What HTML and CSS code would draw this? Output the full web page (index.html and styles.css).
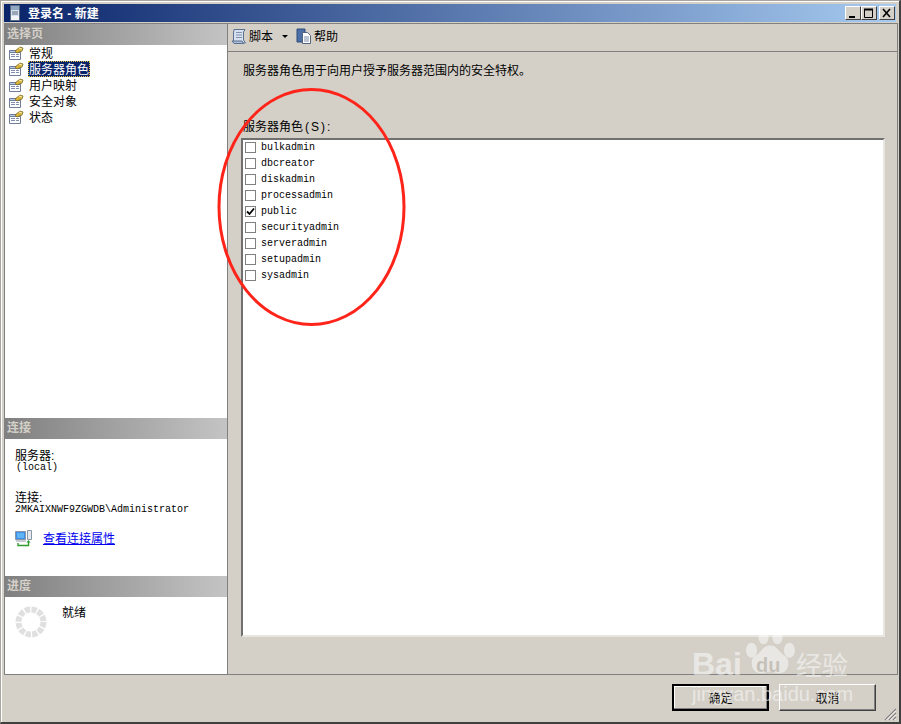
FILE: index.html
```html
<!DOCTYPE html>
<html lang="zh">
<head>
<meta charset="utf-8">
<title>登录名 - 新建</title>
<link rel="stylesheet" href="styles.css">
</head>
<body>
<svg class="defs" width="0" height="0">
  <symbol id="page" viewBox="0 0 16 16">
    <path d="M1.500 5.500h11v9h-11z" fill="#fff" stroke="#6f7f9a"/>
    <path d="M1.500 5.500h11v2h-11z" fill="#b9c8e0" stroke="#6f7f9a"/>
    <path d="M3 9.500h4M3 11.500h4M8 9.500h3M8 11.500h3" stroke="#7d8fb0"/>
    <path d="M7 6l5-4 3 1-1 3-5 2z" fill="#d9b43a" stroke="#7d6c28" stroke-width=".8"/>
    <path d="M11 3l3 1" stroke="#fff2a8"/>
  </symbol>
</svg>
<div class="window">
  <header class="titlebar">
    <svg class="title-icon" width="12" height="16" viewBox="0 0 12 16">
      <path d="M1.500.5h9v15h-9z" fill="#d8e2ee" stroke="#5a6a80"/>
      <path d="M2 1h8v4H2z" fill="#8fa6c4"/>
      <path d="M3 7h6M3 9h6" stroke="#5a6a80"/>
      <path d="M2 11h8v4H2z" fill="#f2f5f8"/>
    </svg>
    <span class="title-text">登录名 - 新建</span>
    <div class="caption-buttons">
      <span class="caption-btn"><svg width="12" height="10" viewBox="0 0 12 10"><path d="M2 8h6v2H2z" fill="#000"/></svg></span>
      <span class="caption-btn"><svg width="12" height="10" viewBox="0 0 12 10"><path d="M1.500 1.500h8v8h-8z" fill="none" stroke="#000"/><path d="M1 1.500h9" stroke="#000" stroke-width="2"/></svg></span>
      <span class="caption-btn caption-close"><svg width="12" height="10" viewBox="0 0 12 10"><path d="M2 1l7 8M9 1L2 9" stroke="#000" stroke-width="1.600" fill="none"/></svg></span>
    </div>
  </header>

  <div class="main">
    <aside class="side">
      <div class="side-head">选择页</div>
      <ul class="nav">
        <li class="nav-item"><svg class="nav-icon"><use href="#page"/></svg><span class="nav-label">常规</span></li>
        <li class="nav-item"><svg class="nav-icon"><use href="#page"/></svg><span class="nav-label nav-selected">服务器角色</span></li>
        <li class="nav-item"><svg class="nav-icon"><use href="#page"/></svg><span class="nav-label">用户映射</span></li>
        <li class="nav-item"><svg class="nav-icon"><use href="#page"/></svg><span class="nav-label">安全对象</span></li>
        <li class="nav-item"><svg class="nav-icon"><use href="#page"/></svg><span class="nav-label">状态</span></li>
      </ul>
      <div class="side-head">连接</div>
      <div class="conn">
        <div class="conn-label">服务器:</div>
        <div class="mono conn-local">(local)</div>
        <div class="conn-label conn-gap">连接:</div>
        <div class="mono">2MKAIXNWF9ZGWDB\Administrator</div>
        <div class="conn-link-row">
          <svg width="17" height="17" viewBox="0 0 17 17">
            <path d="M.5 1.500h10v8H.5z" fill="#3f8fe8" stroke="#8a97a8"/>
            <path d="M2 3h7v5H2z" fill="#5fb4f5"/>
            <path d="M1 10h10v2H1z" fill="#c8ccd4"/>
            <path d="M12.500.5h4v9h-4z" fill="#e6e8ec" stroke="#8a97a8"/>
            <path d="M3 13v2.500h10.500V12" fill="none" stroke="#2f9a2f" stroke-width="1.400"/>
            <path d="M11.500 12.500l2-2.500 2 2.500z" fill="#2f9a2f"/>
          </svg>
          <a class="conn-link" href="#">查看连接属性</a>
        </div>
      </div>
      <div class="side-head">进度</div>
      <div class="progress">
        <svg class="spinner" width="32" height="32" viewBox="0 0 32 32">
          <circle cx="16" cy="16" r="12.500" fill="none" stroke="#e0e0e0" stroke-width="6" stroke-dasharray="5.200 1.350"/>
        </svg>
        <span class="progress-text">就绪</span>
      </div>
    </aside>

    <section class="content">
      <div class="toolbar">
        <svg width="17" height="17" viewBox="0 0 17 17">
          <path d="M3 1.500h11l-1.500 2.500V12l2 3H4l-1.500-2V5z" fill="#d6e0ee" stroke="#5c7190"/>
          <path d="M1 13h10l1.500 2.500H3z" fill="#a9bcd6" stroke="#5c7190"/>
          <path d="M5 4.500h6M5 7h6M5 9.500h6" stroke="#7f93b0"/>
        </svg>
        <span class="tool-text">脚本</span>
        <span class="tool-arrow"></span>
        <svg class="tool-help-icon" width="17" height="17" viewBox="0 0 17 17">
          <path d="M1 1h8v13H1z" fill="#4d6fa8" stroke="#2f4a78"/>
          <path d="M6.500 4.500h5l3 3v8h-8z" fill="#fff" stroke="#50637f"/>
          <path d="M8 9h5M8 11h5M8 13h5" stroke="#7b8ea8"/>
        </svg>
        <span class="tool-text">帮助</span>
      </div>
      <div class="pane">
        <p class="desc">服务器角色用于向用户授予服务器范围内的安全特权。</p>
        <div class="list-label">服务器角色<span class="label-key">(S):</span></div>
        <ul class="role-list">
          <li class="role"><span class="check"></span>bulkadmin</li>
          <li class="role"><span class="check"></span>dbcreator</li>
          <li class="role"><span class="check"></span>diskadmin</li>
          <li class="role"><span class="check"></span>processadmin</li>
          <li class="role"><span class="check"><svg width="9" height="9" viewBox="0 0 9 9"><path d="M1 4.500l2.500 2.500L8 1.500" fill="none" stroke="#000" stroke-width="1.800"/></svg></span>public</li>
          <li class="role"><span class="check"></span>securityadmin</li>
          <li class="role"><span class="check"></span>serveradmin</li>
          <li class="role"><span class="check"></span>setupadmin</li>
          <li class="role"><span class="check"></span>sysadmin</li>
        </ul>
      </div>
    </section>
  </div>

  <footer class="footer">
    <button class="btn btn-default">确定</button>
    <button class="btn">取消</button>
  </footer>
  <svg class="grip" width="13" height="13" viewBox="0 0 13 13">
    <path d="M12 1L1 12M12 5L5 12M12 9L9 12" stroke="#808080" stroke-width="1.200"/>
    <path d="M12 2.500L2.500 12M12 6.500L6.500 12M12 10.500L10.500 12" stroke="#fff"/>
  </svg>
</div>

<svg class="annotation" width="194" height="242" viewBox="0 0 194 242">
  <ellipse cx="97.500" cy="119" rx="92.500" ry="117.500" fill="none" stroke="#ff2419" stroke-width="3"/>
</svg>

<div class="watermark">
  <svg class="wm-paw" width="50" height="50" viewBox="0 0 54 50">
    <ellipse cx="7" cy="22" rx="6" ry="8" fill="#fff"/>
    <ellipse cx="20" cy="8" rx="5.500" ry="7.500" fill="#fff"/>
    <ellipse cx="35" cy="8" rx="5.500" ry="7.500" fill="#fff"/>
    <ellipse cx="48" cy="22" rx="6" ry="8" fill="#fff"/>
    <path d="M27 17c8 0 9 7 16 11 7 5 4 19-6 19-4 0-7-2-10-2s-6 2-10 2c-10 0-13-14-6-19 7-4 8-11 16-11z" fill="#fff"/>
  </svg>
  <span class="wm-bai">Bai</span>
  <span class="wm-du">du</span>
  <span class="wm-cn">经验</span>
  <span class="wm-url">jingyan.baidu.com</span>
</div>
</body>
</html>
```
FILE: styles.css
```css
* { box-sizing: border-box; }
html, body { margin: 0; padding: 0; }
body {
  width: 901px;
  height: 724px;
  overflow: hidden;
  position: relative;
  background: #d4d0c8;
  font-family: "Liberation Sans", "Noto Sans CJK SC", sans-serif;
  font-size: 12px;
  color: #000;
}
.defs { position: absolute; }
.window {
  width: 901px;
  height: 724px;
  display: flex;
  flex-direction: column;
  position: relative;
  padding: 4px 4px 0 4px;
  border-left: 1px solid #a8a59e;
  border-top: 1px solid #a8a59e;
  border-right: 2px solid #404040;
  border-bottom: 2px solid #404040;
  box-shadow: inset 1px 1px 0 #fff;
}
.titlebar {
  flex: none;
  height: 18px;
  margin: -1px -1px 0 -1px;
  display: flex;
  align-items: center;
  padding: 0 1px 0 5px;
  background: linear-gradient(90deg, #0a246a, #a6caf0);
  color: #fff;
}
.title-icon { flex: none; }
.title-text { margin-left: 7px; font-weight: 700; font-size: 12px; line-height: 20px; height: 18px; }
.caption-buttons { margin-left: auto; display: flex; }
.caption-btn {
  width: 16px;
  height: 14px;
  display: flex;
  align-items: center;
  justify-content: center;
  background: #d4d0c8;
  border: 1px solid;
  border-color: #fff #404040 #404040 #fff;
}
.caption-close { margin-left: 2px; }
.main {
  flex: none;
  height: 652px;
  margin: 1px 0 0 -1px;
  display: flex;
  border: 1px solid #808080;
  width: 894px;
}
.side {
  flex: none;
  width: 223px;
  display: flex;
  flex-direction: column;
  background: #fff;
  border-right: 1px solid #808080;
}
.side-head {
  flex: none;
  height: 21px;
  padding-left: 2px;
  line-height: 20px;
  font-weight: 700;
  color: #d4d0c8;
  background: linear-gradient(90deg, #808080, #c4c4c4);
}
.nav {
  flex: none;
  height: 373px;
  margin: 0;
  padding: 0 0 0 3px;
  list-style: none;
}
.nav-item {
  height: 16px;
  display: flex;
  align-items: center;
}
.nav-icon { width: 16px; height: 16px; flex: none; }
.nav-label { margin-left: 4px; padding: 0 1px; line-height: 18px; height: 16px; overflow: hidden; }
.nav-selected {
  background: #0a246a;
  color: #fff;
  outline: 1px dotted #e8c040;
  outline-offset: -1px;
}
.conn { flex: none; height: 137px; padding: 10px 0 0 10px; }
.conn-label { line-height: 15px; height: 13px; }
.mono {
  font-family: "Liberation Mono", monospace;
  font-size: 10px;
  line-height: 11px;
  height: 11px;
}
.conn-local { margin-left: 1px; }
.conn-gap { margin-top: 18px; }
.conn-link-row { display: flex; align-items: center; margin-top: 15px; }
.conn-link { margin-left: 11px; color: #0000ee; text-decoration: underline; line-height: 16px; }
.progress { flex: 1; display: flex; align-items: flex-start; padding: 9px 0 0 10px; }
.spinner { flex: none; }
.progress-text { margin: -1px 0 0 15px; line-height: 16px; }
.content { flex: 1; min-width: 0; display: flex; flex-direction: column; }
.toolbar {
  flex: none;
  height: 28px;
  display: flex;
  align-items: center;
  padding: 0 0 2px 3px;
  border-bottom: 1px solid #808080;
}
.tool-text { margin-left: 1px; line-height: 16px; }
.tool-arrow {
  width: 0;
  height: 0;
  margin-left: 9px;
  border-left: 3px solid transparent;
  border-right: 3px solid transparent;
  border-top: 3px solid #000;
}
.tool-help-icon { margin-left: 8px; }
.pane { flex: 1; min-height: 0; padding: 11px 12px 0 13px; }
.desc { margin: 0 0 0 2px; line-height: 16px; height: 16px; }
.list-label { margin: 40px 0 0 2px; line-height: 16px; height: 16px; }
.label-key { margin-left: 2px; letter-spacing: 2px; }
.role-list {
  list-style: none;
  margin: 3px 0 0 0;
  padding: 0 0 0 2px;
  height: 499px;
  background: #fff;
  border: 2px solid;
  border-color: #707070 #e8e6e0 #e8e6e0 #707070;
}
.role {
  height: 16px;
  display: flex;
  align-items: center;
  font-family: "Liberation Mono", monospace;
  font-size: 10px;
}
.role:first-child { margin-top: -1px; }
.check {
  flex: none;
  width: 11px;
  height: 11px;
  margin-right: 5px;
  border: 1px solid #808080;
  display: flex;
  align-items: center;
  justify-content: center;
}
.footer {
  flex: 1;
  display: flex;
  justify-content: flex-end;
  align-items: flex-start;
  gap: 10px;
  padding: 9px 19px 0 0;
}
.btn {
  width: 97px;
  height: 27px;
  padding: 0;
  font: inherit;
  color: #000;
  background: #d4d0c8;
  border: 1px solid;
  border-color: #fff #404040 #404040 #fff;
  box-shadow: inset -1px -1px 0 #808080;
}
.btn-default {
  border: 2px solid #000;
  box-shadow: inset -1px -1px 0 #808080, inset 1px 1px 0 #fff;
}
.grip { position: absolute; right: 2px; bottom: 1px; }
.annotation { position: absolute; left: 214px; top: 88px; pointer-events: none; }
.watermark {
  position: absolute;
  left: 690px;
  top: 625px;
  width: 210px;
  height: 90px;
  color: #fff;
  opacity: .5;
  pointer-events: none;
  font-family: "Liberation Sans", sans-serif;
}
.wm-paw { position: absolute; left: 55px; top: 3px; }
.wm-bai { position: absolute; left: 2px; top: 21px; font-size: 32px; line-height: 36px; font-weight: 700; }
.wm-du { position: absolute; left: 66px; top: 28px; font-size: 20px; line-height: 24px; font-weight: 700; color: #b8b4ac; }
.wm-cn { position: absolute; left: 106px; top: 23px; font-size: 26px; line-height: 32px; font-family: "Noto Sans CJK SC", sans-serif; }
.wm-url { position: absolute; left: 2px; top: 57px; font-size: 20px; line-height: 24px; }
```
